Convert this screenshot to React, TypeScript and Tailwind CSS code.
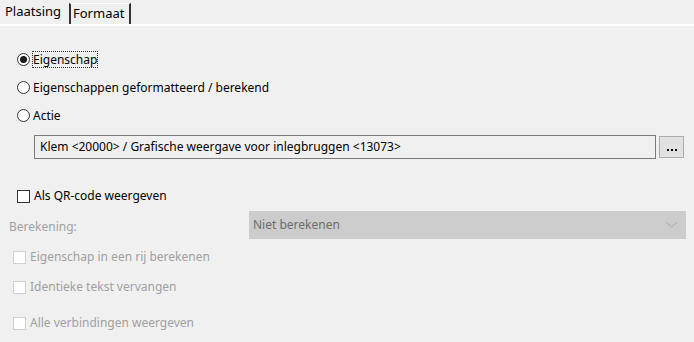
import React from 'react';

function Radio({ checked, label, focus }: { checked?: boolean; label: string; focus?: boolean }) {
    return (
        <div className="flex items-center h-[28px]">
            <span className="w-[13px] h-[13px] rounded-full border border-[#333] bg-white flex items-center justify-center">
                {checked && <span className="w-[7px] h-[7px] rounded-full bg-[#1a1a1a]" />}
            </span>
            <span className={'ml-[3px] leading-[15px] ' + (focus ? 'outline outline-1 outline-dotted outline-[#333]' : '')}>
                {label}
            </span>
        </div>
    );
}

function Check({ label, disabled }: { label: string; disabled?: boolean }) {
    return (
        <div className={'flex items-center ' + (disabled ? 'text-[#a0a0a0]' : 'text-black')}>
            <span
                className={
                    'w-[13px] h-[13px] border bg-white ' +
                    (disabled ? 'border-[#cfcfcf]' : 'border-[#333]')
                }
            />
            <span className="ml-[4px]">{label}</span>
        </div>
    );
}

export default function App() {
    return (
        <div
            className="w-[694px] h-[342px] bg-[#f0f0f0] text-[12px] text-black overflow-hidden"
            style={{ fontFamily: '"Noto Sans", "Open Sans", sans-serif' }}
        >
            <div className="h-[26px] flex items-end border-b-2 border-white">
                <div className="h-[24px] px-[5px] flex items-center text-[13px] w-[69px]">Plaatsing</div>
                <div className="h-[21px] px-[2px] flex items-center text-[13px] border-l-2 border-r-2 border-t border-l-[#333] border-r-[#333] border-t-white w-[62px]">
                    Formaat
                </div>
            </div>

            <div className="pl-[17px] pr-[8px] pt-[19px]">
                <Radio checked focus label="Eigenschap" />
                <Radio label="Eigenschappen geformatteerd / berekend" />
                <Radio label="Actie" />

                <div className="flex items-center ml-[17px] mt-[6px]">
                    <div className="w-[622px] h-[24px] border border-[#7a7a7a] bg-[#f0f0f0] px-[5px] flex items-center">
                        Klem &lt;20000&gt; / Grafische weergave voor inlegbruggen &lt;13073&gt;
                    </div>
                    <div className="ml-[3px] w-[25px] h-[22px] border border-[#adadad] bg-[#e1e1e1] flex items-end justify-center pb-[6px] gap-[2px]">
                        <span className="w-[2px] h-[2px] bg-black" />
                        <span className="w-[2px] h-[2px] bg-black" />
                        <span className="w-[2px] h-[2px] bg-black" />
                    </div>
                </div>

                <div className="mt-[29px] h-[16px] flex items-center">
                    <Check label="Als QR-code weergeven" />
                </div>

                <div className="mt-[7px] flex items-center">
                    <span className="w-[240px] -ml-[8px] text-[#a0a0a0] pt-[3px]">Berekening:</span>
                    <div className="w-[437px] h-[28px] border border-[#cccccc] bg-[#cccccc] flex items-center justify-between pl-[3px] pr-[8px] text-[#6d6d6d]">
                        <span>Niet berekenen</span>
                        <svg width="11" height="6" viewBox="0 0 11 6">
                            <path d="M0.5 0.5 L5.5 5 L10.5 0.5" fill="none" stroke="#a8a8a8" strokeWidth="1" />
                        </svg>
                    </div>
                </div>

                <div className="-ml-[4px] mt-[10px] h-[16px] flex items-center">
                    <Check disabled label="Eigenschap in een rij berekenen" />
                </div>
                <div className="-ml-[4px] mt-[14px] h-[16px] flex items-center">
                    <Check disabled label="Identieke tekst vervangen" />
                </div>
                <div className="-ml-[4px] mt-[20px] h-[16px] flex items-center">
                    <Check disabled label="Alle verbindingen weergeven" />
                </div>
            </div>
        </div>
    );
}
